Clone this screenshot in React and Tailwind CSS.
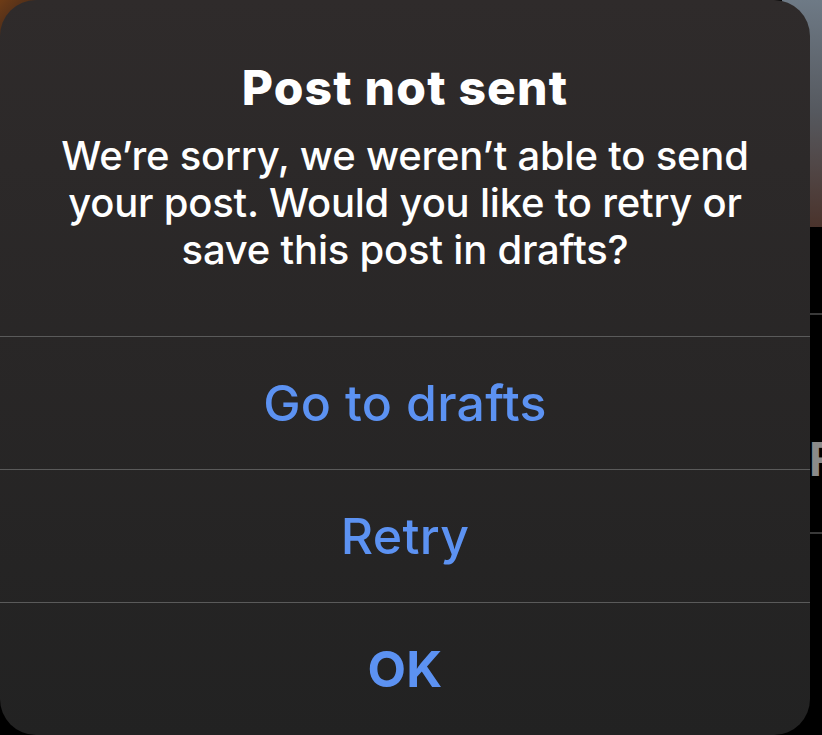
import React from "react";

const font = { fontFamily: "Inter, 'Noto Sans', sans-serif" };

function Backdrop() {
  return (
    <>
      {/* top-right strip of the blurred screen behind the alert */}
      <div className="absolute right-0 top-0 h-[227px] w-[40px] bg-gradient-to-b from-[#6e7a86] via-[#55585e] to-[#4a332c]" />
      <div className="absolute right-0 top-[313px] h-[2px] w-[14px] bg-[#3a3a3a]" />
      <div className="absolute right-0 top-[532px] h-[2px] w-[14px] bg-[#3a3a3a]" />
      <div className="absolute right-[-14px] top-[436px] text-[46px] font-bold leading-none text-[#8a8a8a]">F</div>
      {/* warm corner at the top left */}
      <div className="absolute left-0 top-0 h-[60px] w-[60px] bg-gradient-to-br from-[#6e3c16] via-[#3a2418] to-[#2d2a2a]" />
    </>
  );
}

function ActionRow({ label, bold }) {
  return (
    <button
      type="button"
      className={`flex h-[133px] w-full items-center justify-center border-t border-[#5a5a5a] text-[50px] tracking-[0.3px] text-[#5c92f2] ${
        bold ? "font-bold" : "font-medium"
      }`}
    >
      {label}
    </button>
  );
}

export default function App() {
  return (
    <div className="relative h-[735px] w-[822px] overflow-hidden bg-black" style={font}>
      <Backdrop />
      <div className="relative flex h-[735px] w-[810px] flex-col overflow-hidden rounded-[36px] bg-gradient-to-b from-[#2f2b2b] to-[#222222]">
        <header className="flex h-[336px] flex-col items-center pt-[60px] text-center text-white">
          <h1 className="text-[48px] font-extrabold leading-[56px] tracking-[1.2px]">Post not sent</h1>
          <p className="mt-[16px] text-[40px] font-medium leading-[47px] tracking-[-0.2px]">
            We’re sorry, we weren’t able to send
            <br />
            your post. Would you like to retry or
            <br />
            save this post in drafts?
          </p>
        </header>
        <ActionRow label="Go to drafts" />
        <ActionRow label="Retry" />
        <ActionRow label="OK" bold />
      </div>
    </div>
  );
}
